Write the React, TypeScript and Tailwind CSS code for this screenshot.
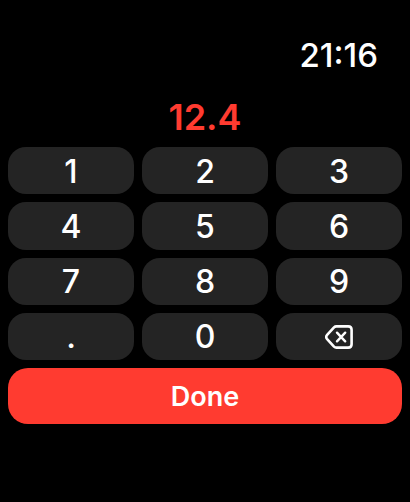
import { useState } from "react";

const digits = ["1", "2", "3", "4", "5", "6", "7", "8", "9", ".", "0"];

const keyClass =
  "flex items-center justify-center rounded-[18px] bg-[#242424] pt-0.5 text-[32px] leading-8 font-medium text-white";

function BackspaceIcon() {
  return (
    <svg
      width="28"
      height="24"
      viewBox="0 0 28 24"
      fill="none"
      stroke="currentColor"
      strokeLinecap="round"
      strokeLinejoin="round"
      aria-hidden="true"
    >
      <path
        d="M11.4 1.4H23.2Q26.6 1.4 26.6 4.8V19.2Q26.6 22.6 23.2 22.6H11.4Q10 22.6 9 21.6L1.9 13.8Q.5 12 1.9 10.2L9 2.4Q10 1.4 11.4 1.4Z"
        strokeWidth="2.6"
      />
      <path d="M12 7.7L20.2 16.3M20.2 7.7L12 16.3" strokeWidth="2.4" />
    </svg>
  );
}

export default function App() {
  const [value, setValue] = useState("12.4");

  return (
    <main className="flex min-h-screen flex-col bg-black px-2 pt-[35px] font-['Inter','Liberation_Sans',sans-serif]">
      <header className="flex justify-end pr-6 text-[33px] leading-10 font-medium text-white">
        <time>21:16</time>
      </header>
      <output className="mt-5 block text-center text-[36px] leading-[44px] font-semibold text-[#ff3b30]">
        {value}
      </output>
      <div className="mt-2 grid h-[213px] grid-cols-3 grid-rows-4 gap-2">
        {digits.map((digit) => (
          <button
            key={digit}
            type="button"
            className={keyClass}
            onClick={() => setValue(value + digit)}
          >
            {digit}
          </button>
        ))}
        <button
          type="button"
          aria-label="Delete"
          className={keyClass}
          onClick={() => setValue(value.slice(0, -1))}
        >
          <BackspaceIcon />
        </button>
      </div>
      <button
        type="button"
        className="mt-2 h-14 rounded-[20px] bg-[#ff3b30] pt-0.5 text-[27px] leading-8 font-semibold text-white"
      >
        Done
      </button>
    </main>
  );
}
